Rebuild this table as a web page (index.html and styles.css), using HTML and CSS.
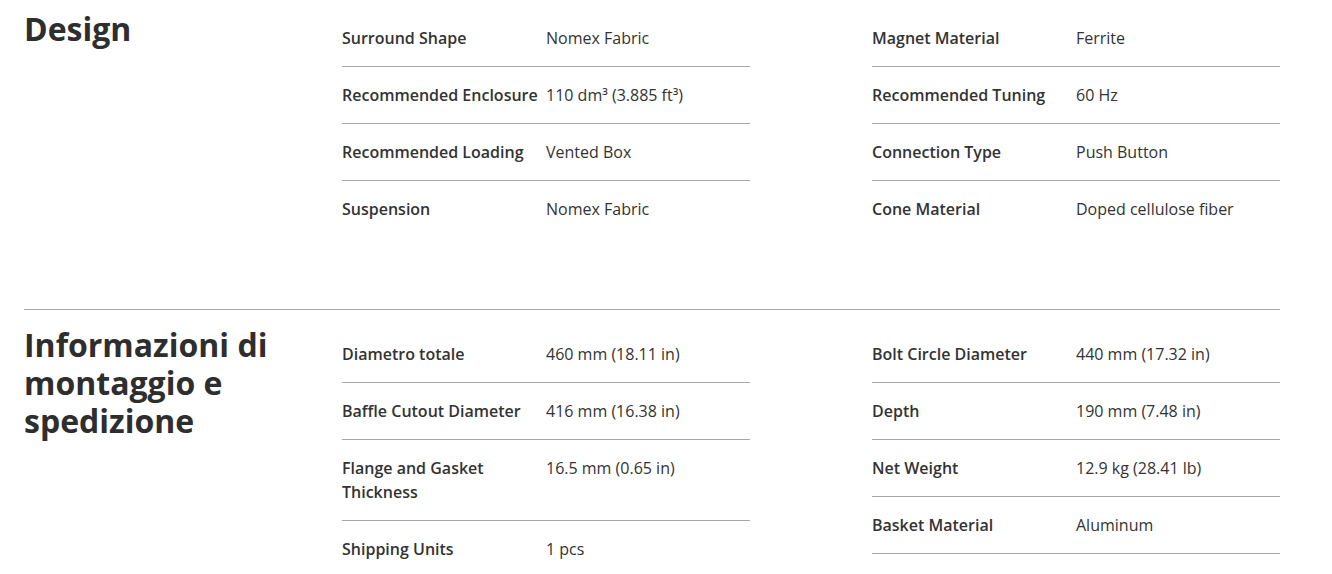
FILE: index.html
```html
<!DOCTYPE html>
<html lang="it">
<head>
<meta charset="utf-8">
<title>Specifiche</title>
<link rel="stylesheet" href="styles.css">
</head>
<body>
<div class="page">
  <section class="spec-section first">
    <h2 class="spec-title">Design</h2>
    <div class="spec-cols">
      <dl class="spec-list">
        <div class="row"><dt>Surround Shape</dt><dd>Nomex Fabric</dd></div>
        <div class="row"><dt>Recommended Enclosure</dt><dd>110 dm³ (3.885 ft³)</dd></div>
        <div class="row"><dt>Recommended Loading</dt><dd>Vented Box</dd></div>
        <div class="row last"><dt>Suspension</dt><dd>Nomex Fabric</dd></div>
      </dl>
      <dl class="spec-list">
        <div class="row"><dt>Magnet Material</dt><dd>Ferrite</dd></div>
        <div class="row"><dt>Recommended Tuning</dt><dd>60 Hz</dd></div>
        <div class="row"><dt>Connection Type</dt><dd>Push Button</dd></div>
        <div class="row last"><dt>Cone Material</dt><dd>Doped cellulose fiber</dd></div>
      </dl>
    </div>
  </section>
  <section class="spec-section second">
    <h2 class="spec-title">Informazioni di montaggio e spedizione</h2>
    <div class="spec-cols">
      <dl class="spec-list">
        <div class="row"><dt>Diametro totale</dt><dd>460 mm (18.11 in)</dd></div>
        <div class="row"><dt>Baffle Cutout Diameter</dt><dd>416 mm (16.38 in)</dd></div>
        <div class="row"><dt>Flange and Gasket Thickness</dt><dd>16.5 mm (0.65 in)</dd></div>
        <div class="row last"><dt>Shipping Units</dt><dd>1 pcs</dd></div>
      </dl>
      <dl class="spec-list">
        <div class="row"><dt>Bolt Circle Diameter</dt><dd>440 mm (17.32 in)</dd></div>
        <div class="row"><dt>Depth</dt><dd>190 mm (7.48 in)</dd></div>
        <div class="row"><dt>Net Weight</dt><dd>12.9 kg (28.41 lb)</dd></div>
        <div class="row"><dt>Basket Material</dt><dd>Aluminum</dd></div>
      </dl>
    </div>
  </section>
</div>
</body>
</html>
```

FILE: styles.css
```css
* { box-sizing: border-box; }
html, body { margin: 0; padding: 0; background: #fff; }
body {
  font-family: "Open Sans", "Liberation Sans", sans-serif;
  color: #333;
}
.page {
  width: 1256px;
  margin-left: 24px;
  padding-top: 10px;
}
.spec-section {
  display: grid;
  grid-template-columns: 318px 1fr;
}
.spec-section.first {
  padding-bottom: 72px;
  border-bottom: 1px solid #aaa;
}
.spec-section.second {
  padding-top: 16px;
}
.spec-title {
  margin: 0;
  font-size: 32px;
  line-height: 38px;
  font-weight: 700;
  color: #2e2e2e;
  padding-right: 20px;
}
.spec-cols {
  display: grid;
  grid-template-columns: 408px 408px;
  column-gap: 122px;
  align-items: start;
}
.spec-list {
  margin: 0;
  display: flex;
  flex-direction: column;
}
.row {
  display: grid;
  grid-template-columns: 204px 204px;
  padding: 16px 0;
  border-bottom: 1px solid #aaa;
  font-size: 16px;
  line-height: 24px;
}
.row.last { border-bottom: none; }
.row dt {
  font-weight: 600;
  color: #333;
  padding-right: 6px;
}
.row dd {
  margin: 0;
  font-weight: 400;
  color: #333;
}
```
